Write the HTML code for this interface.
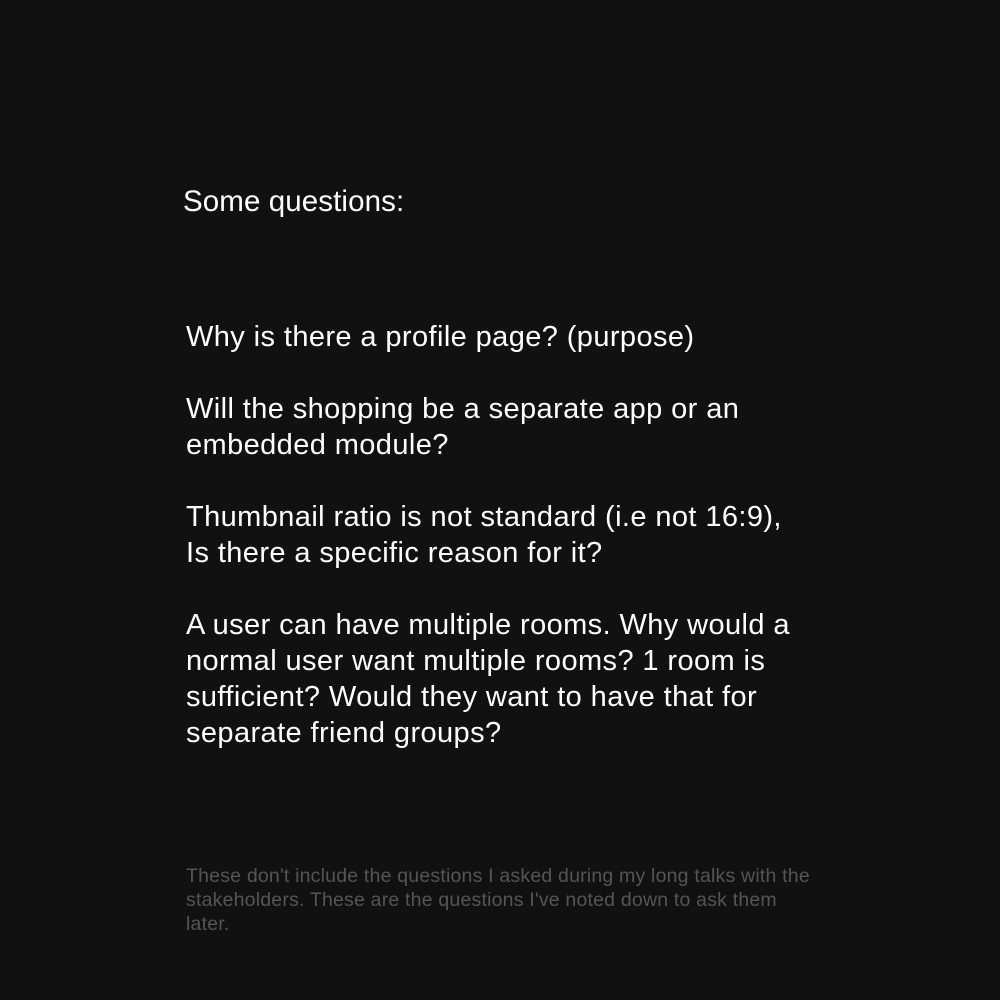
<!DOCTYPE html>
<html><head><style>
html,body{margin:0;padding:0;background:#111111;width:1000px;height:1000px;overflow:hidden;font-family:"Liberation Sans",Arial,sans-serif;}
.h{position:absolute;left:183px;top:184px;font-size:29.5px;line-height:36px;color:#fff;letter-spacing:0.1px;}
.b{position:absolute;left:186px;top:319px;font-size:29px;line-height:36px;color:#fff;width:700px;letter-spacing:0.4px;}
.b p{margin:0 0 36px 0;}
.n{position:absolute;left:186px;top:864px;font-size:19.5px;line-height:24px;color:#555;width:700px;letter-spacing:0.2px;}
</style></head><body>
<div class="h">Some questions:</div>
<div class="b">
<p>Why is there a profile page? (purpose)</p>
<p>Will the shopping be a separate app or an<br>embedded module?</p>
<p>Thumbnail ratio is not standard (i.e not 16:9),<br>Is there a specific reason for it?</p>
<p>A user can have multiple rooms. Why would a<br>normal user want multiple rooms? 1 room is<br>sufficient? Would they want to have that for<br>separate friend groups?</p>
</div>
<div class="n">These don't include the questions I asked during my long talks with the<br>stakeholders. These are the questions I've noted down to ask them<br>later.</div>
</body></html>
